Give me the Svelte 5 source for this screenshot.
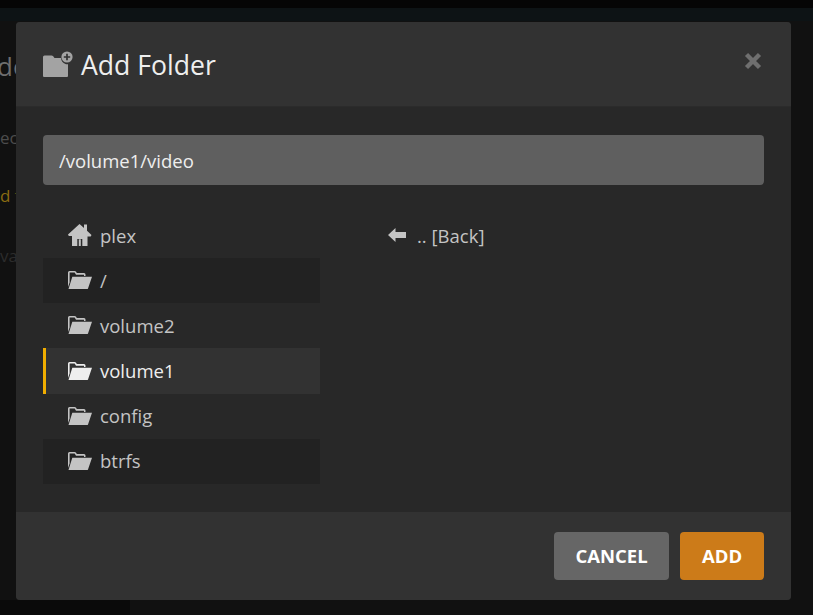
<script>
    const roots = [
        { name: 'plex', icon: 'home' },
        { name: '/', icon: 'folder' },
        { name: 'volume2', icon: 'folder' },
        { name: 'volume1', icon: 'folder', selected: true },
        { name: 'config', icon: 'folder' },
        { name: 'btrfs', icon: 'folder' }
    ];
</script>

<div class="page">
    <div class="topbar"></div>
    <div class="navbar"></div>
    <div class="behind">
        <div class="bg-title">de</div>
        <div class="bg-line first">ec</div>
        <div class="bg-line warn">d f</div>
        <div class="bg-line faint">va</div>
    </div>
    <div class="sidebar-end"></div>
</div>

<div class="modal">
    <header class="modal-header">
        <svg class="add-icon" viewBox="0 0 30 26" width="30" height="26">
            <path fill="#a3a3a3" d="M0 6q0-1.500 1.500-1.500h7q1 0 1.700.8l1.300 1.700h6.500q.3 4.500 4.500 6 1 .3 2.500.2V25q0 1-1 1H1q-1 0-1-1z"/>
            <circle cx="24" cy="6" r="5.600" fill="#a3a3a3"/>
            <path stroke="#323232" stroke-width="1.700" d="M24 2.800v6.400M20.800 6h6.400"/>
        </svg>
        <h2>Add Folder</h2>
        <svg class="close" viewBox="0 0 18 18" width="18" height="18">
            <path stroke="#6f6f6f" stroke-width="4.400" d="M2.500 2.500l13 13M15.500 2.500l-13 13"/>
        </svg>
    </header>

    <div class="modal-body">
        <input class="path" type="text" value="/volume1/video" />
        <div class="browser">
            <ul class="roots">
                {#each roots as root}
                    <li class:selected={root.selected}>
                        {#if root.icon === 'home'}
                            <svg viewBox="0 0 24 22" width="24" height="22">
                                <path fill="#c4c4c4" fill-rule="evenodd" d="M11.500 0l4.500 4V.500h3v6.200l4.500 4.300-.8 1.500H19.500V22h-5.200v-7h-5v7H4V12H.8L0 10.500zM10.800 15.200h2v6.800h-2z"/>
                            </svg>
                        {:else}
                            <svg viewBox="0 0 24 20" width="24" height="20">
                                <path fill="#c4c4c4" d="M0 2.500Q0 1 1.500 1h5q1 0 1.600.8l.7 1.200H16q1.500 0 1.500 1.500V6H16V4.700H8L6.700 2.600H1.600v10L0 17z"/>
                                <path fill="#c4c4c4" d="M4.300 6.700H24l-4 11.700q-.2.600-1 .6H.5z"/>
                            </svg>
                        {/if}
                        <span>{root.name}</span>
                    </li>
                {/each}
            </ul>
            <div class="folders">
                <div class="back">
                    <svg viewBox="0 0 18 14" width="18" height="14">
                        <path fill="#c4c4c4" d="M0 7l7.500-7v4H18v6H7.500v4z"/>
                    </svg>
                    <span>.. [Back]</span>
                </div>
            </div>
        </div>
    </div>

    <footer class="modal-footer">
        <button class="btn cancel">CANCEL</button>
        <button class="btn add">ADD</button>
    </footer>
</div>

<style>
    :global(body) {
        background: #111111;
        font-family: "Open Sans", sans-serif;
    }

    .page {
        height: 615px;
        overflow: hidden;
        display: flex;
        flex-direction: column;
        background: #111111;
    }

    .topbar {
        height: 8px;
        background: #050505;
    }

    .navbar {
        height: 13px;
        background: #0d1315;
    }

    .behind {
        flex: 1;
        padding-top: 27px;
    }

    .bg-title {
        font-size: 26px;
        line-height: 36px;
        margin-left: -3px;
        color: #6e6e6e;
    }

    .bg-line {
        font-size: 17px;
        line-height: 22px;
    }

    .first {
        margin-top: 43px;
        color: #4c4c4c;
    }

    .warn {
        margin-top: 36px;
        color: #8a6c12;
    }

    .faint {
        margin-top: 38px;
        color: #2c2c2c;
    }

    .sidebar-end {
        width: 130px;
        height: 15px;
        background: #0a0a0a;
    }

    .modal {
        position: absolute;
        left: 16px;
        top: 22px;
        width: 775px;
        height: 578px;
        display: flex;
        flex-direction: column;
        border-radius: 4px;
        overflow: hidden;
        background: #282828;
    }

    .modal-header {
        height: 85px;
        flex: none;
        box-sizing: border-box;
        display: flex;
        align-items: center;
        padding: 0 27px;
        background: #323232;
        border-bottom: 1px solid #2b2b2b;
    }

    .add-icon {
        margin-right: 8px;
        margin-top: -1px;
    }

    h2 {
        margin: 2px 0 0;
        flex: 1;
        font-size: 26.6px;
        font-weight: 400;
        color: #eeeeee;
    }

    .close {
        margin-right: 2px;
        margin-top: -6px;
    }

    .modal-body {
        flex: 1;
        padding: 28px 27px 0;
    }

    .path {
        display: block;
        box-sizing: border-box;
        width: 100%;
        height: 50px;
        padding: 0 16px;
        border: 0;
        border-radius: 4px;
        background: #5f5f5f;
        color: #eeeeee;
        font: 400 18.5px "Open Sans", sans-serif;
    }

    .browser {
        display: flex;
        margin-top: 28px;
    }

    .roots {
        width: 277px;
        margin: 0;
        padding: 0;
        list-style: none;
    }

    li {
        height: 45.17px;
        box-sizing: border-box;
        display: flex;
        align-items: center;
        gap: 8px;
        padding-left: 25px;
        padding-bottom: 1px;
        font-size: 18.5px;
        color: #c4c4c4;
    }

    li:nth-child(even) {
        background: #222222;
    }

    li svg {
        flex: none;
    }

    li.selected {
        background: #323232;
        color: #eeeeee;
        border-left: 3px solid #f0ad00;
        padding-left: 22px;
    }

    li.selected path {
        fill: #eeeeee;
    }

    .folders {
        flex: 1;
        padding-left: 68px;
    }

    .back {
        height: 45.17px;
        box-sizing: border-box;
        display: flex;
        align-items: center;
        gap: 11px;
        padding-bottom: 1px;
        font-size: 18.5px;
        color: #c4c4c4;
    }

    .modal-footer {
        height: 88px;
        flex: none;
        box-sizing: border-box;
        display: flex;
        justify-content: flex-end;
        gap: 11px;
        padding: 20px 27px;
        background: #323232;
    }

    .btn {
        height: 48px;
        padding-bottom: 3px;
        border: 0;
        border-radius: 4px;
        color: #ffffff;
        font: 700 18.5px "Open Sans", sans-serif;
    }

    .cancel {
        width: 115px;
        background: #666666;
    }

    .add {
        width: 84px;
        background: #cc7b19;
    }
</style>
